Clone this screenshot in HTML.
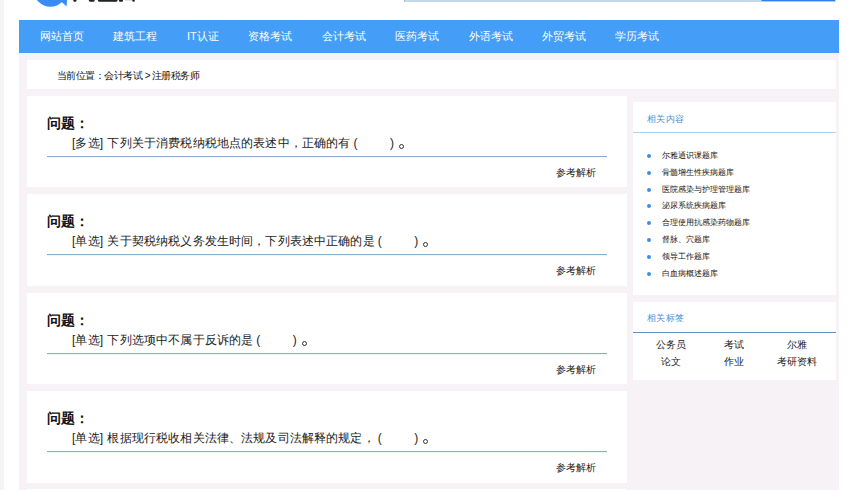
<!DOCTYPE html>
<html><head><meta charset="utf-8">
<style>
*{margin:0;padding:0;box-sizing:border-box}
html,body{width:854px;height:490px;overflow:hidden;background:#fff;font-family:"Liberation Sans",sans-serif;position:relative}
.a{position:absolute;white-space:nowrap}
#strip{left:0;top:0;width:4px;height:490px;background:#f4f4f4}
#wrap{left:19px;top:53px;width:820px;height:437px;background:#f6f2f5}
#nav{left:19px;top:20px;width:820px;height:33px;background:#449df6}
.nv{top:20px;height:33px;line-height:33px;color:#fff;font-size:11px}
#crumb{left:27px;top:60px;width:809px;height:29px;background:#fff}
.card{left:27px;width:600px;background:#fff}
.qt{font-size:14px;font-weight:bold;color:#111;line-height:16px}
.qx{font-size:12px;letter-spacing:0.15px;word-spacing:0.7px;color:#222;line-height:16px}
.p{display:inline-block;width:12.2px;padding-left:3px;letter-spacing:0}
.sp{display:inline-block;width:24.4px}
.dt{display:inline-block;width:5px;height:5px;border:1.2px solid #333;border-radius:50%;margin-left:-0.5px;vertical-align:-2px}
.ul{height:1px;background:#8badc9;box-shadow:0 1px 0 #eafafb}
.ck{font-size:10px;color:#222;line-height:12px;margin-top:1px}
.side{left:633px;width:203px;background:#fff}
.sh{font-size:9px;letter-spacing:0.4px;color:#4a8ed4;line-height:12px;margin-top:1px}
.li{font-size:8px;color:#111;line-height:10px}
.dot{width:4px;height:4px;border-radius:50%;background:#3f8ee6}
.tg{font-size:10px;color:#222;line-height:12px;width:64px;text-align:center}
</style></head><body>
<div class="a" id="strip"></div>
<!-- header -->
<svg class="a" style="left:0;top:0" width="854" height="10">
<circle cx="50.4" cy="-10.1" r="16.8" fill="#3a8cf5"/>
<polygon points="58,0 62,2.2 66.6,6.4 67,0" fill="#3a8cf5"/>
<rect x="73.3" y="-3" width="3.2" height="4.8" rx="1.2" fill="#1f2326"/>
<rect x="88.9" y="-3" width="5.7" height="4.8" rx="1.5" fill="#1f2326"/>
<rect x="97.9" y="-3" width="19.6" height="4.8" rx="1.5" fill="#1f2326"/>
<rect x="119" y="-3" width="4" height="4.8" rx="1" fill="#1f2326"/>
<rect x="125" y="-3" width="7" height="3.6" fill="#c9cccd"/>
<rect x="132.3" y="-3" width="2.5" height="4.8" rx="1" fill="#1f2326"/>
<rect x="404" y="-10" width="357.4" height="11.6" fill="#c4e2ec"/>
<rect x="404" y="-10" width="1" height="11.6" fill="#8fb0d0"/>
<rect x="404" y="0.8" width="357.4" height="0.8" fill="#b9c9dc"/>
<rect x="761.4" y="-10" width="74" height="11.4" fill="#2f7ff0"/>
</svg>
<div class="a" id="wrap"></div>
<div class="a" id="nav"></div>
<div class="a nv" style="left:40px">网站首页</div>
<div class="a nv" style="left:113px">建筑工程</div>
<div class="a nv" style="left:187px">IT认证</div>
<div class="a nv" style="left:248px">资格考试</div>
<div class="a nv" style="left:322px">会计考试</div>
<div class="a nv" style="left:395px">医药考试</div>
<div class="a nv" style="left:469px">外语考试</div>
<div class="a nv" style="left:542px">外贸考试</div>
<div class="a nv" style="left:615px">学历考试</div>

<div class="a" id="crumb"></div>
<div class="a" id="bc" style="left:57px;top:70px;font-size:10px;letter-spacing:-0.54px;line-height:12px;color:#111">当前位置：会计考试<span style="margin:0 2px 0 2.5px">&gt;</span>注册税务师</div>

<!-- cards -->
<div class="a card" style="top:96px;height:91px"></div>
<div class="a qt" style="left:47px;top:115px">问题：</div>
<div class="a qx" style="left:72px;top:135px">[多选] 下列关于消费税纳税地点的表述中，正确的有<span class="p">(</span><span class="sp"></span><span class="p">)</span><span class="dt"></span></div>
<div class="a ul" style="left:47px;top:156px;width:560px"></div>
<div class="a ck" style="left:556px;top:166px">参考解析</div>

<div class="a card" style="top:194px;height:92px"></div>
<div class="a qt" style="left:47px;top:213px">问题：</div>
<div class="a qx" style="left:72px;top:233px">[单选] 关于契税纳税义务发生时间，下列表述中正确的是<span class="p">(</span><span class="sp"></span><span class="p">)</span><span class="dt"></span></div>
<div class="a ul" style="left:47px;top:254px;width:560px"></div>
<div class="a ck" style="left:556px;top:264px">参考解析</div>

<div class="a card" style="top:293px;height:91px"></div>
<div class="a qt" style="left:47px;top:312px">问题：</div>
<div class="a qx" style="left:72px;top:332px">[单选] 下列选项中不属于反诉的是<span class="p">(</span><span class="sp"></span><span class="p">)</span><span class="dt"></span></div>
<div class="a ul" style="left:47px;top:353px;width:560px"></div>
<div class="a ck" style="left:556px;top:363px">参考解析</div>

<div class="a card" style="top:391px;height:92px"></div>
<div class="a card" style="top:489px;height:10px"></div>
<div class="a qt" style="left:47px;top:410px">问题：</div>
<div class="a qx" style="left:72px;top:430px">[单选] 根据现行税收相关法律、法规及司法解释的规定，<span class="p">(</span><span class="sp"></span><span class="p">)</span><span class="dt"></span></div>
<div class="a ul" style="left:47px;top:451px;width:560px"></div>
<div class="a ck" style="left:556px;top:461px">参考解析</div>

<!-- sidebar 1 -->
<div class="a side" style="top:102px;height:193px"></div>
<div class="a sh" style="left:647px;top:112px">相关内容</div>
<div class="a" style="left:633px;top:132px;width:203px;height:1px;background:#a9d3ea"></div>
<div class="a dot" style="left:647px;top:154px"></div><div class="a li" style="left:662px;top:151px">尔雅通识课题库</div>
<div class="a dot" style="left:647px;top:171px"></div><div class="a li" style="left:662px;top:168px">骨髓增生性疾病题库</div>
<div class="a dot" style="left:647px;top:188px"></div><div class="a li" style="left:662px;top:185px">医院感染与护理管理题库</div>
<div class="a dot" style="left:647px;top:204px"></div><div class="a li" style="left:662px;top:201px">泌尿系统疾病题库</div>
<div class="a dot" style="left:647px;top:221px"></div><div class="a li" style="left:662px;top:218px">合理使用抗感染药物题库</div>
<div class="a dot" style="left:647px;top:238px"></div><div class="a li" style="left:662px;top:235px">督脉、穴题库</div>
<div class="a dot" style="left:647px;top:255px"></div><div class="a li" style="left:662px;top:252px">领导工作题库</div>
<div class="a dot" style="left:647px;top:272px"></div><div class="a li" style="left:662px;top:269px">白血病概述题库</div>

<!-- sidebar 2 -->
<div class="a side" style="top:302px;height:78px"></div>
<div class="a sh" style="left:647px;top:311px">相关标签</div>
<div class="a" style="left:633px;top:332px;width:203px;height:1px;background:#5b90c9"></div>
<div class="a tg" style="left:639px;top:339px">公务员</div>
<div class="a tg" style="left:702px;top:339px">考试</div>
<div class="a tg" style="left:765px;top:339px">尔雅</div>
<div class="a tg" style="left:639px;top:356px">论文</div>
<div class="a tg" style="left:702px;top:356px">作业</div>
<div class="a tg" style="left:765px;top:356px">考研资料</div>
</body></html>
